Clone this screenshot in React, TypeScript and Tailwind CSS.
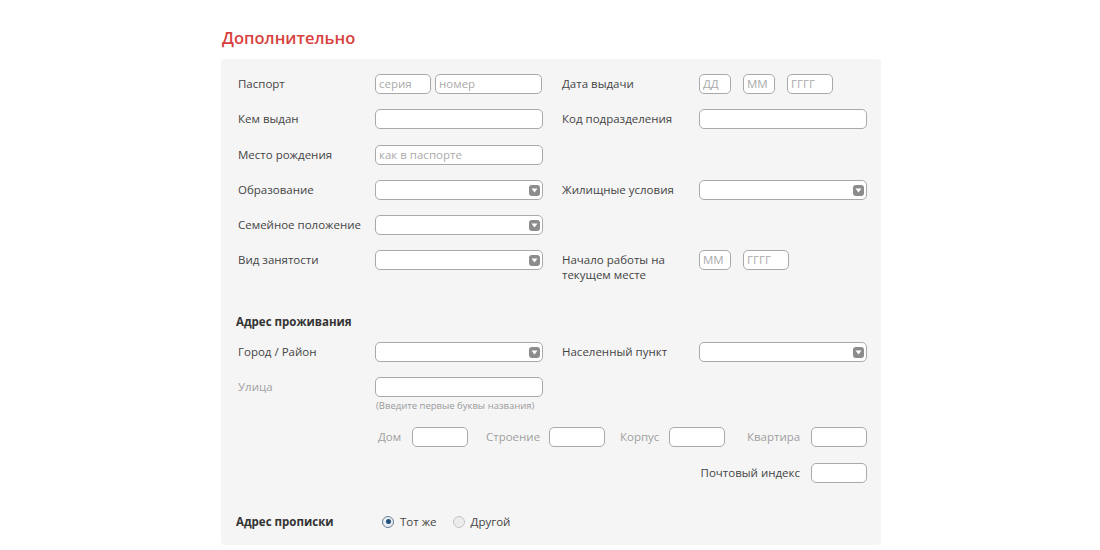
import type { ReactNode } from 'react';

const font = { fontFamily: '"Open Sans", "DejaVu Sans", sans-serif' };

function Input({ w, placeholder }: { w: string; placeholder?: string }) {
  return (
    <div
      className={`${w} h-[20px] shrink-0 rounded-[5px] border border-[#a9a9a9] bg-white px-[3px] text-[11.5px] leading-[18px] text-[#aaaaaa]`}
    >
      {placeholder}
    </div>
  );
}

function Select() {
  return (
    <div className="flex h-[20px] w-[168px] shrink-0 items-center justify-end rounded-[5px] border border-[#a9a9a9] bg-white pr-[2px]">
      <div className="flex h-[11px] w-[11px] items-center justify-center rounded-[3px] bg-[#8c8c8c]">
        <svg width="7" height="5" viewBox="0 0 7 5">
          <path d="M0.5 0.5 L6.5 0.5 L3.5 4.5 Z" fill="#ffffff" />
        </svg>
      </div>
    </div>
  );
}

function Label({ children, muted = false }: { children: ReactNode; muted?: boolean }) {
  return (
    <div
      className={`w-[137px] shrink-0 pt-[2px] text-[11.5px] leading-[15px] ${
        muted ? 'text-[#a0a0a0]' : 'text-[#444444]'
      }`}
    >
      {children}
    </div>
  );
}

function Row({ children, h = 'h-[35px]' }: { children: ReactNode; h?: string }) {
  return <div className={`flex ${h} items-start`}>{children}</div>;
}

function Half({ children }: { children: ReactNode }) {
  return <div className="flex w-[304px] shrink-0 items-start">{children}</div>;
}

function Radio({ checked }: { checked?: boolean }) {
  return (
    <span
      className={`flex h-[12px] w-[12px] items-center justify-center rounded-full border ${
        checked ? 'border-[#6b7f93] bg-[#e8eef4]' : 'border-[#c4c4c4] bg-[#ececec]'
      }`}
    >
      {checked && <span className="h-[5px] w-[5px] rounded-full bg-[#1f4f7a]" />}
    </span>
  );
}

export default function App() {
  return (
    <div className="min-h-[550px] bg-white" style={font}>
      <div className="ml-[221px] w-[660px] pt-[27px]">
        <h2 className="pl-[1px] text-[16.5px] font-semibold leading-[22px] text-[#d8413e]">
          Дополнительно
        </h2>

        <div className="mt-[10px] h-[486px] rounded-[4px] bg-[#f5f5f5] pl-[17px] pr-[14px] pt-[15px]">
          <Row>
            <Half>
              <Label>Паспорт</Label>
              <div className="flex gap-[4px]">
                <Input w="w-[56px]" placeholder="серия" />
                <Input w="w-[107px]" placeholder="номер" />
              </div>
            </Half>
            <div className="w-[20px] shrink-0" />
            <Label>Дата выдачи</Label>
            <div className="flex gap-[12px]">
              <Input w="w-[32px]" placeholder="ДД" />
              <Input w="w-[32px]" placeholder="ММ" />
              <Input w="w-[46px]" placeholder="ГГГГ" />
            </div>
          </Row>

          <Row h="h-[36px]">
            <Half>
              <Label>Кем выдан</Label>
              <Input w="w-[168px]" />
            </Half>
            <div className="w-[20px] shrink-0" />
            <Label>Код подразделения</Label>
            <Input w="w-[168px]" />
          </Row>

          <Row>
            <Half>
              <Label>Место рождения</Label>
              <Input w="w-[168px]" placeholder="как в паспорте" />
            </Half>
          </Row>

          <Row>
            <Half>
              <Label>Образование</Label>
              <Select />
            </Half>
            <div className="w-[20px] shrink-0" />
            <Label>Жилищные условия</Label>
            <Select />
          </Row>

          <Row>
            <Half>
              <Label>Семейное положение</Label>
              <Select />
            </Half>
          </Row>

          <Row h="h-[64px]">
            <Half>
              <Label>Вид занятости</Label>
              <Select />
            </Half>
            <div className="w-[20px] shrink-0" />
            <Label>
              Начало работы на
              <br />
              текущем месте
            </Label>
            <div className="flex gap-[12px]">
              <Input w="w-[32px]" placeholder="ММ" />
              <Input w="w-[46px]" placeholder="ГГГГ" />
            </div>
          </Row>

          <div className="-ml-[2px] h-[28px] text-[11.5px] font-bold leading-[15px] text-[#333333]">
            Адрес проживания
          </div>

          <Row>
            <Half>
              <Label>Город / Район</Label>
              <Select />
            </Half>
            <div className="w-[20px] shrink-0" />
            <Label>Населенный пункт</Label>
            <Select />
          </Row>

          <Row h="h-[50px]">
            <Half>
              <Label muted>Улица</Label>
              <div>
                <Input w="w-[168px]" />
                <div className="mt-[2px] pl-[1px] text-[9.5px] leading-[13px] text-[#9a9a9a]">
                  (Введите первые буквы названия)
                </div>
              </div>
            </Half>
          </Row>

          <div className="flex h-[36px] items-start pl-[137px]">
            <div className="flex items-start text-[11.5px] leading-[15px] text-[#a0a0a0]">
              <span className="ml-[3px] w-[34px] pt-[2px]">Дом</span>
              <Input w="w-[56px]" />
              <span className="ml-[18px] w-[63px] pt-[2px]">Строение</span>
              <Input w="w-[56px]" />
              <span className="ml-[15px] w-[49px] pt-[2px]">Корпус</span>
              <Input w="w-[56px]" />
              <span className="ml-[22px] w-[64px] pt-[2px]">Квартира</span>
              <Input w="w-[56px]" />
            </div>
          </div>

          <div className="flex h-[51px] items-start justify-end gap-[11px]">
            <span className="pt-[2px] text-[11.5px] leading-[15px] text-[#444444]">Почтовый индекс</span>
            <Input w="w-[56px]" />
          </div>

          <div className="flex items-center">
            <div className="-ml-[2px] w-[146px] text-[11.5px] font-bold leading-[15px] text-[#333333]">
              Адрес прописки
            </div>
            <Radio checked />
            <span className="ml-[6px] text-[11.5px] leading-[15px] text-[#444444]">Тот же</span>
            <span className="ml-[16px]">
              <Radio />
            </span>
            <span className="ml-[6px] text-[11.5px] leading-[15px] text-[#444444]">Другой</span>
          </div>
        </div>
      </div>
    </div>
  );
}
